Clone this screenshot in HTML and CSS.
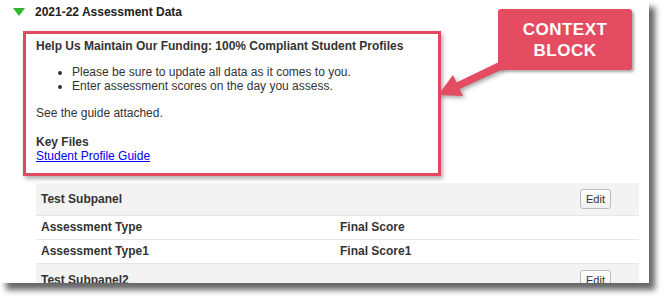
FILE: index.html
```html
<!DOCTYPE html>
<html>
<head lang="en">
    <meta charset="UTF-8">
    <title>Assessment Data</title>
    <link rel="stylesheet" href="styles.css">
</head>
<body>
<div id="page">
    <div id="panel">
        <div class="section-title">
            <span class="caret"></span>
            <span>2021-22 Assessment Data</span>
        </div>

        <div class="context-block">
            <p class="heading">Help Us Maintain Our Funding: 100% Compliant Student Profiles</p>
            <ul>
                <li>Please be sure to update all data as it comes to you.</li>
                <li>Enter assessment scores on the day you assess.</li>
            </ul>
            <p class="note">See the guide attached.</p>
            <p class="heading">Key Files</p>
            <a href="#">Student Profile Guide</a>
        </div>

        <div class="subpanels">
            <div class="sub-head">
                <span>Test Subpanel</span>
                <button>Edit</button>
            </div>
            <div class="sub-row">
                <span>Assessment Type</span>
                <span>Final Score</span>
            </div>
            <div class="sub-row">
                <span>Assessment Type1</span>
                <span>Final Score1</span>
            </div>
            <div class="sub-head">
                <span>Test Subpanel2</span>
                <button>Edit</button>
            </div>
        </div>
    </div>

    <!-- annotation -->
    <svg id="arrow" width="670" height="305" viewBox="0 0 670 305">
        <polygon points="438,95 453,75 456.5,82.5 499,62 502,69.5 459.5,89 463,96" fill="#e44c62"/>
    </svg>
    <div id="callout">CONTEXT<br>BLOCK</div>
</div>
</body>
</html>
```

FILE: styles.css
```css
*{
    margin: 0;
    padding: 0;
}
body{
    background: #fff;
    font-family: "Liberation Sans", Arial, sans-serif;
    font-size: 12px;
    color: #333;
}
#page{
    position: relative;
    width: 670px;
    height: 305px;
    overflow: hidden;
}
#panel{
    width: 649px;
    height: 283px;
    overflow: hidden;
    background: #fff;
    box-shadow: 6px 7px 6px rgba(0,0,0,0.6);
}
.section-title{
    display: flex;
    align-items: center;
    gap: 10px;
    height: 24px;
    padding-left: 13px;
    font-weight: bold;
    color: #222;
}
.caret{
    width: 0;
    height: 0;
    border-left: 6px solid transparent;
    border-right: 6px solid transparent;
    border-top: 8px solid #2eb82e;
}
.context-block{
    width: 392px;
    height: 134px;
    margin: 7px 0 0 23px;
    padding: 5px 10px 0 10px;
    border: 3px solid #e2495f;
    box-shadow: 2px 3px 4px rgba(0,0,0,0.3);
    line-height: 14px;
}
.heading{
    font-weight: bold;
}
.context-block ul{
    margin: 12px 0 13px 36px;
    font-size: 12px;
}
.note{
    margin-bottom: 15px;
}
.context-block a{
    color: #00e;
}
.subpanels{
    margin: 7px 10px 0 36px;
    font-weight: bold;
}
.sub-head{
    display: flex;
    justify-content: space-between;
    align-items: center;
    height: 32px;
    padding: 0 28px 0 5px;
    background: #f3f3f3;
    border-bottom: 1px solid #e6e6e6;
}
.sub-head button{
    width: 31px;
    height: 20px;
    font-family: "Liberation Sans", Arial, sans-serif;
    font-size: 11px;
    color: #333;
    background: linear-gradient(#fff, #f0f0f0);
    border: 1px solid #bbb;
    border-radius: 3px;
}
.sub-row{
    display: grid;
    grid-template-columns: 1fr 1fr;
    height: 23px;
    line-height: 23px;
    padding-left: 5px;
    border-bottom: 1px solid #e6e6e6;
}
#arrow{
    position: absolute;
    left: 0;
    top: 0;
    filter: drop-shadow(2px 2px 2px rgba(0,0,0,0.35));
}
#callout{
    position: absolute;
    left: 498px;
    top: 9px;
    width: 134px;
    height: 61px;
    box-sizing: border-box;
    padding-top: 10px;
    background: #e44c62;
    border-radius: 3px;
    box-shadow: 2px 2px 3px rgba(0,0,0,0.35);
    color: #fff;
    font-weight: bold;
    font-size: 17px;
    line-height: 21px;
    letter-spacing: 0.5px;
    text-align: center;
}
```
